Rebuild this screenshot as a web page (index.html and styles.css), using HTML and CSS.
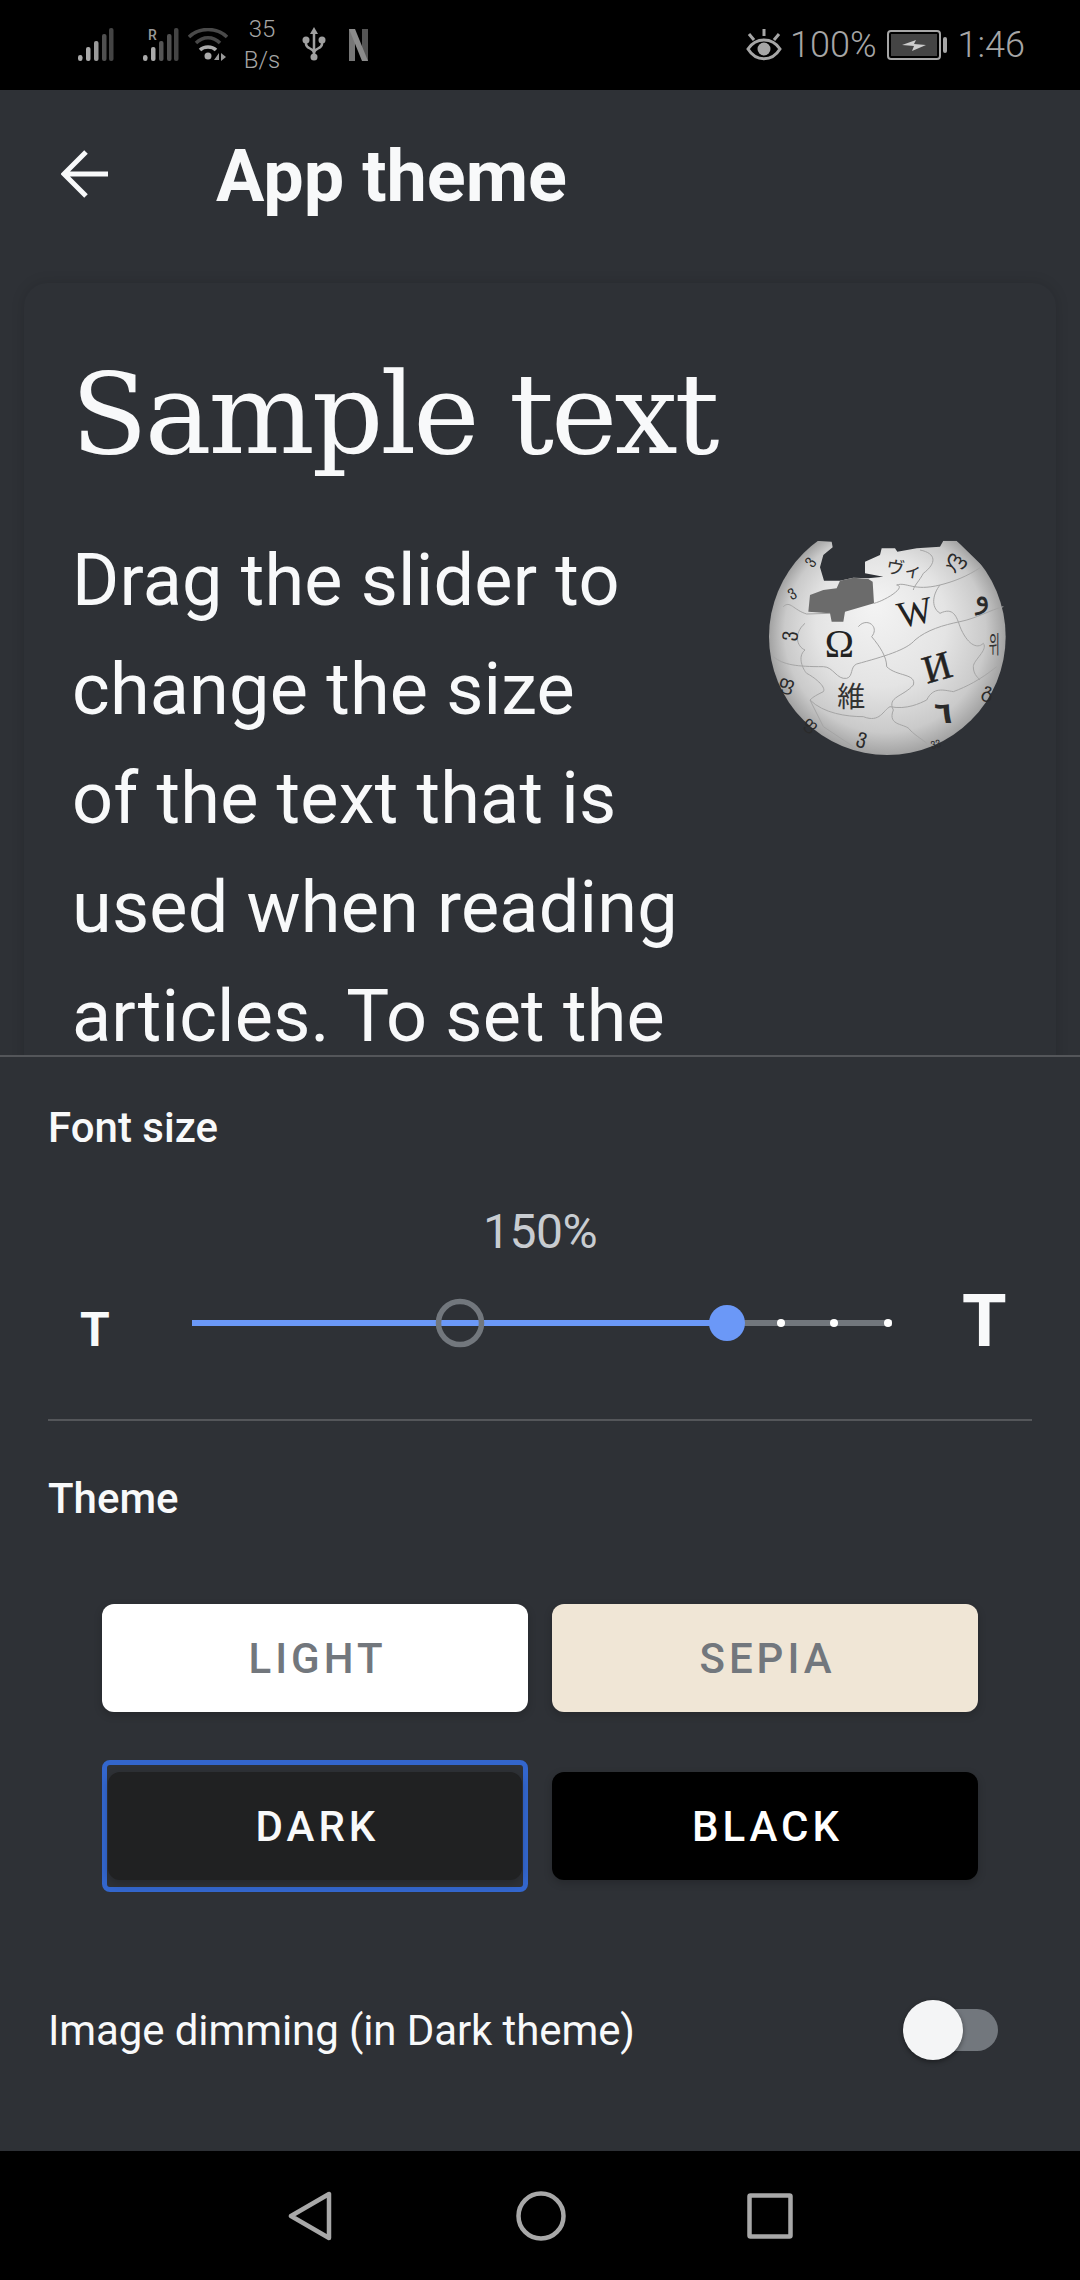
FILE: index.html
```html
<!DOCTYPE html>
<html>
<head>
	<title>App theme</title>
	<link rel="stylesheet" href="styles.css">
</head>
<body>
	<!-- Status bar -->
	<div class="statusbar">
		<div class="status-left">
			<svg class="ic-signal" width="36" height="34" viewBox="0 0 36 34">
				<rect x="0" y="27" width="4.5" height="6" rx="2.2" fill="#aaa"/>
				<rect x="8" y="19" width="4.5" height="14" rx="2" fill="#aaa"/>
				<rect x="16" y="13" width="4.5" height="20" rx="2" fill="#999"/>
				<rect x="24" y="6" width="4.5" height="27" rx="2" fill="#505050"/>
				<rect x="31" y="0" width="4.5" height="33" rx="2" fill="#444"/>
			</svg>
			<svg class="ic-signal2" width="36" height="34" viewBox="0 0 36 34">
				<rect x="0" y="27" width="4.5" height="6" rx="2.2" fill="#aaa"/>
				<rect x="8" y="19" width="4.5" height="14" rx="2" fill="#aaa"/>
				<rect x="16" y="13" width="4.5" height="20" rx="2" fill="#555"/>
				<rect x="24" y="6" width="4.5" height="27" rx="2" fill="#505050"/>
				<rect x="31" y="0" width="4.5" height="33" rx="2" fill="#444"/>
				<text x="5" y="12" class="roam">R</text>
			</svg>
			<svg class="ic-wifi" width="40" height="34" viewBox="0 0 40 34">
				<path d="M1 9 C11 -1 29 -1 39 9" fill="none" stroke="#4a4a4a" stroke-width="3.5"/>
				<path d="M8 15 C15 8 25 8 32 15" fill="none" stroke="#484848" stroke-width="3.5"/>
				<path d="M12 22 C16 18 24 18 28 22" fill="none" stroke="#aaa" stroke-width="3.5"/>
				<circle cx="20" cy="28" r="3.5" fill="#aaa"/>
				<path d="M26 32 L31 25 V32 Z M33 25 L38 29 L33 33 Z" fill="#999"/>
			</svg>
			<div class="netspeed"><span>35</span><span>B/s</span></div>
			<svg class="ic-usb" width="24" height="36" viewBox="0 0 24 36">
				<path d="M12 0 L16 7 H8 Z" fill="#a0a0a0"/>
				<path d="M12 6 V30 M4 14 V17 C4 22 12 21 12 26 M20 14 V17 C20 22 12 21 12 26" fill="none" stroke="#a0a0a0" stroke-width="2.5"/>
				<circle cx="12" cy="30" r="3.5" fill="#a0a0a0"/>
				<circle cx="4" cy="13" r="3.5" fill="#a0a0a0"/>
				<circle cx="20" cy="13" r="3.5" fill="#a0a0a0"/>
			</svg>
			<svg class="ic-n" width="19" height="34" viewBox="0 0 19 34">
				<path d="M0 1 H6 V33 L0 33 Z" fill="#777"/>
				<path d="M13 1 H19 V33 L13 33 Z" fill="#555"/>
				<path d="M0 1 H6 L19 33 H13 Z" fill="#8c8c8c"/>
			</svg>
		</div>
		<div class="status-right">
			<svg width="36" height="32" viewBox="0 0 36 32">
				<path d="M2 20 C10 8 26 8 34 20 C26 33 10 33 2 20 Z" fill="none" stroke="#a6a6a6" stroke-width="3"/>
				<circle cx="18" cy="20" r="6.5" fill="#a6a6a6"/>
				<path d="M18 0 V7 M3 5 L8 11 M33 5 L28 11" stroke="#a6a6a6" stroke-width="3"/>
			</svg>
			<span class="status-text">100%</span>
			<svg class="ic-batt" width="60" height="30" viewBox="0 0 60 30">
				<rect x="1" y="1" width="52" height="28" rx="3" fill="none" stroke="#a6a6a6" stroke-width="2"/>
				<rect x="4" y="4" width="46" height="22" fill="#444"/>
				<rect x="56" y="7" width="4" height="16" rx="2" fill="#a6a6a6"/>
				<path d="M15 15 L29 10 L27 14 L39 15 L25 21 L27 16 Z" fill="#ccc"/>
			</svg>
			<span class="status-text clock">1:46</span>
		</div>
	</div>

	<!-- Toolbar -->
	<div class="toolbar">
		<svg class="back" width="48" height="48" viewBox="0 0 48 48">
			<path d="M47 24 H3 M25 2 L3 24 L25 46" fill="none" stroke="#f8f9fa" stroke-width="5"/>
		</svg>
		<h1 class="title">App theme</h1>
	</div>

	<!-- Article preview, cut off by the sheet -->
	<div class="preview">
		<div class="card">
			<h2 class="sample-title">Sample text</h2>
			<svg class="globe" width="300" height="270" viewBox="0 0 900 810">
				<defs>
					<radialGradient id="ball" gradientUnits="userSpaceOnUse" cx="442" cy="380" r="355" fx="400" fy="280">
						<stop offset="0" stop-color="#f4f4f4"/>
						<stop offset="0.55" stop-color="#e4e4e4"/>
						<stop offset="0.85" stop-color="#cacaca"/>
						<stop offset="1" stop-color="#a2a2a2"/>
					</radialGradient>
					<clipPath id="globeCut">
						<path d="M0 810 V300 L150 95 L225 92 L275 95 L278 112 L250 135 L240 172 L252 212 L300 212 L340 203 L385 205 L430 200 L375 190 L375 155 L420 135 L425 115 L465 115 L472 125 L530 115 L600 110 L610 92 L650 92 L730 170 H900 V810 Z"/>
					</clipPath>
				</defs>
				<g clip-path="url(#globeCut)">
					<circle cx="442" cy="380" r="355" fill="url(#ball)"/>
				</g>
				<path d="M205 305 L210 255 L250 240 L290 235 L300 212 L340 203 L385 207 L398 215 L402 280 L315 305 L310 335 L275 335 L270 310 Z" fill="#6b6b6b"/>
				<g fill="none" stroke="#a5a5a5" stroke-width="3">
					<path d="M130 290 C150 270 160 300 200 312 L270 310 M402 280 C440 270 500 230 470 225 C500 215 520 245 600 225 C640 215 680 200 722 172"/>
					<path d="M100 440 C130 465 170 470 250 470 C280 470 290 510 320 505 C340 500 330 470 350 462 C430 440 500 420 525 390 C560 360 610 345 660 335 C710 325 750 300 790 290"/>
					<path d="M355 350 C380 320 420 350 395 380 C420 410 440 440 440 470 C470 500 530 490 520 525 C490 560 440 560 460 600 C440 650 500 640 510 660 C530 680 550 690 560 700"/>
					<path d="M210 570 C250 610 320 620 370 620 C420 640 430 600 450 590 C500 600 540 580 560 570 C580 530 610 540 640 545 C680 530 720 510 770 470"/>
					<path d="M600 225 C580 250 570 290 600 310 C640 290 650 320 660 350 C680 400 710 420 730 400 C745 420 700 450 700 470 C700 490 710 500 720 510"/>
					<path d="M195 340 C160 370 170 410 195 420 C170 440 190 480 200 490 C220 500 260 530 250 545 C230 555 220 560 210 570 L250 650 L340 710"/>
					<path d="M540 120 C590 130 590 160 550 190 C540 210 520 230 520 240"/>
				</g>
				<g class="globe-glyphs">
					<text x="254" y="440" class="g-serif" font-size="118">Ω</text>
					<text x="470" y="345" class="g-serif" font-size="112" transform="rotate(-12 520 300)">W</text>
					<text x="548" y="510" class="g-serif g-thick" font-size="118" transform="rotate(-16 595 470)">И</text>
					<text x="292" y="592" class="g-cjk" font-size="84">維</text>
					<text x="440" y="192" class="g-cjk" font-size="54" transform="rotate(10 470 170)">ヴィ</text>
					<text transform="translate(746 430) scale(0.6 1.2)" class="g-cjk" font-size="60">위</text>
					<text x="700" y="290" class="g-sans" font-size="96" transform="rotate(-10 720 260)">و</text>
					<text x="582" y="640" class="g-sans g-heavy" font-size="90">٦</text>
					<text x="620" y="170" class="g-sans" font-size="62" transform="rotate(30 645 150)">ლ</text>
					<text x="108" y="400" class="g-sans" font-size="60" transform="rotate(-85 130 370)">ვ</text>
					<text x="120" y="540" class="g-sans" font-size="58" transform="rotate(15 145 510)">ფ</text>
					<text x="728" y="565" class="g-sans" font-size="60" transform="rotate(15 755 540)">გ</text>
					<text x="350" y="705" class="g-sans" font-size="60" transform="rotate(15 385 690)">ვ</text>
					<text x="190" y="665" class="g-sans" font-size="50" transform="rotate(40 220 650)">ფ</text>
					<text x="140" y="255" class="g-sans" font-size="44" transform="rotate(-30 160 240)">ვ</text>
					<text x="190" y="160" class="g-sans" font-size="44" transform="rotate(-55 210 145)">ვ</text>
					<text x="570" y="705" class="g-sans" font-size="30" transform="rotate(-15 595 695)">ვვ</text>
				</g>
			</svg>
			<p class="sample-body">Drag the slider to<br>change the size<br>of the text that is<br>used when reading<br>articles. To set the</p>
		</div>
	</div>

	<!-- Bottom sheet -->
	<div class="sheet">
		<div class="label font-label">Font size</div>
		<div class="percent">150%</div>
		<div class="slider-row">
			<span class="t-small">T</span>
			<svg class="slider" width="720" height="60" viewBox="0 0 720 60">
				<rect x="10" y="27" width="700" height="6" fill="#72777d"/>
				<rect x="10" y="27" width="545" height="6" fill="#6b98f7"/>
				<circle cx="278" cy="30" r="21.5" fill="none" stroke="#72777d" stroke-width="5.5"/>
				<circle cx="599" cy="30" r="4" fill="#fff"/>
				<circle cx="652" cy="30" r="4" fill="#fff"/>
				<circle cx="706" cy="30" r="4" fill="#fff"/>
				<circle cx="545" cy="30" r="18" fill="#6b98f7"/>
			</svg>
			<span class="t-big">T</span>
		</div>
		<div class="divider"></div>
		<div class="label theme-label">Theme</div>
		<div class="theme-grid">
			<div class="theme-slot"><div class="theme-btn light">LIGHT</div></div>
			<div class="theme-slot"><div class="theme-btn sepia">SEPIA</div></div>
			<div class="theme-slot selected"><div class="theme-btn dark">DARK</div></div>
			<div class="theme-slot"><div class="theme-btn black">BLACK</div></div>
		</div>
		<div class="dim-row">
			<span class="dim-text">Image dimming (in Dark theme)</span>
			<div class="switch"><div class="switch-thumb"></div></div>
		</div>
	</div>

	<!-- Navigation bar -->
	<div class="navbar">
		<svg class="nav-back" width="44" height="50" viewBox="0 0 44 50">
			<path d="M41 3 V47 L3 25 Z" fill="none" stroke="#a8a8a8" stroke-width="4.5" stroke-linejoin="round"/>
		</svg>
		<svg width="50" height="50" viewBox="0 0 50 50">
			<circle cx="25" cy="25" r="22.5" fill="none" stroke="#a8a8a8" stroke-width="4.5"/>
		</svg>
		<svg class="nav-recent" width="46" height="46" viewBox="0 0 46 46">
			<rect x="2.5" y="2.5" width="41" height="41" rx="1" fill="none" stroke="#a8a8a8" stroke-width="4.5"/>
		</svg>
	</div>
</body>
</html>
```

FILE: styles.css
```css
html, body {
	margin: 0;
	padding: 0;
}
body {
	width: 1080px;
	height: 2280px;
	display: flex;
	flex-direction: column;
	overflow: hidden;
	background-color: #2e3136;
	color: #f8f9fa;
	font-family: Roboto, sans-serif;
}

/* status bar */
.statusbar {
	height: 90px;
	flex: none;
	background-color: #000;
	display: flex;
	align-items: center;
	justify-content: space-between;
	padding: 0 55px 0 78px;
	color: #a6a6a6;
}
.status-left, .status-right {
	display: flex;
	align-items: center;
}
.ic-signal2 {
	margin-left: 29px;
}
.ic-wifi {
	margin-left: 9px;
}
.netspeed {
	display: flex;
	flex-direction: column;
	align-items: center;
	font-size: 24px;
	line-height: 31px;
	font-weight: 300;
	width: 36px;
	margin-left: 16px;
}
.ic-usb {
	margin-left: 22px;
}
.ic-n {
	margin-left: 23px;
}
.status-text {
	font-size: 36px;
	font-weight: 300;
	margin-left: 8px;
}
.ic-batt {
	margin-left: 10px;
}
.clock {
	margin-left: 11px;
}
.roam {
	font-family: Roboto, sans-serif;
	font-size: 14px;
	font-weight: 500;
	fill: #999;
}

/* toolbar */
.toolbar {
	height: 168px;
	flex: none;
	display: flex;
	align-items: center;
	padding-left: 61px;
}
.title {
	margin: 4px 0 0 107px;
	font-size: 72px;
	font-weight: 700;
}

/* preview card */
.preview {
	flex: 1;
	min-height: 0;
	overflow: hidden;
	padding: 25px 24px 0;
}
.card {
	border-radius: 24px;
	padding: 0 16px 40px 49px;
	box-shadow: 0 0 14px rgba(0, 0, 0, 0.14);
}
.sample-title {
	margin: 0 0 0 -2px;
	padding-top: 71px;
	font-family: "DejaVu Serif", serif;
	font-weight: 400;
	font-size: 112px;
	letter-spacing: -3px;
	line-height: 120px;
}
.globe {
	float: right;
	display: block;
	margin-top: 36px;
}
.sample-body {
	margin: 0 0 0 -1px;
	padding-top: 52px;
	font-size: 72px;
	letter-spacing: 0.2px;
	line-height: 109px;
}
.g-serif {
	font-family: "Liberation Serif", serif;
	fill: #222;
}
.g-cjk {
	font-family: "Noto Sans CJK JP", sans-serif;
	fill: #333;
}
.g-sans {
	font-family: "DejaVu Sans", sans-serif;
	fill: #2a2a2a;
}
.g-heavy {
	font-weight: 700;
}
.g-thick {
	stroke: #222;
	stroke-width: 1.5px;
}

/* bottom sheet */
.sheet {
	height: 1096px;
	flex: none;
	box-sizing: border-box;
	border-top: 2px solid #54565a;
	padding: 0 48px;
	background-color: #2e3136;
}
.label {
	font-size: 42px;
	font-weight: 500;
	line-height: 50px;
}
.font-label {
	margin-top: 46px;
}
.percent {
	margin-top: 51px;
	text-align: center;
	font-size: 48px;
	font-weight: 400;
	letter-spacing: -0.5px;
	line-height: 56px;
	color: #c8ccd1;
}
.slider-row {
	height: 80px;
	margin-top: 20px;
	display: flex;
	align-items: flex-end;
}
.t-small, .t-big {
	font-weight: 700;
}
.t-small {
	font-size: 48px;
	line-height: 60px;
	margin-left: 32px;
	width: 29px;
}
.t-big {
	font-size: 72px;
	line-height: 76px;
	margin-left: 60px;
}
.slider {
	margin-left: 73px;
	margin-bottom: 7px;
}
.divider {
	height: 2px;
	margin-top: 59px;
	background-color: #54565a;
}
.theme-label {
	margin-top: 53px;
}
.theme-grid {
	display: grid;
	grid-template-columns: 426px 426px;
	column-gap: 24px;
	row-gap: 36px;
	margin: 68px 0 0 54px;
}
.theme-slot {
	height: 132px;
	box-sizing: border-box;
	display: flex;
	align-items: center;
}
.theme-slot.selected {
	border: 5px solid #3366cc;
	border-radius: 8px;
	padding: 0 1px;
}
.theme-btn {
	flex: 1;
	height: 108px;
	box-sizing: border-box;
	padding-left: 5px;
	border-radius: 12px;
	display: flex;
	align-items: center;
	justify-content: center;
	font-size: 42px;
	font-weight: 500;
	letter-spacing: 4px;
	box-shadow: 0 3px 8px rgba(0, 0, 0, 0.2);
}
.light {
	background-color: #fff;
	color: #72777d;
}
.sepia {
	background-color: #f0e6d6;
	color: #72777d;
}
.dark {
	background-color: #202122;
	color: #f8f9fa;
}
.black {
	background-color: #000;
	color: #fff;
}
.dim-row {
	margin-top: 108px;
	height: 60px;
	display: flex;
	align-items: center;
	justify-content: space-between;
}
.dim-text {
	font-size: 42px;
	letter-spacing: -0.1px;
}
.switch {
	width: 95px;
	height: 60px;
	margin-right: 34px;
	display: flex;
	align-items: center;
	position: relative;
}
.switch::before {
	content: "";
	display: block;
	width: 75px;
	height: 42px;
	margin-left: 20px;
	border-radius: 21px;
	background-color: #72777d;
}
.switch-thumb {
	position: absolute;
	left: 0;
	top: 0;
	width: 60px;
	height: 60px;
	border-radius: 50%;
	background-color: #f4f5f6;
	box-shadow: 0 2px 5px rgba(0, 0, 0, 0.4);
}

/* navigation bar */
.navbar {
	height: 129px;
	flex: none;
	background-color: #000;
	display: flex;
	align-items: center;
	justify-content: center;
	gap: 182px;
}
.nav-back {
	margin-right: 2px;
}
.nav-recent {
	margin-left: -1px;
}
```
